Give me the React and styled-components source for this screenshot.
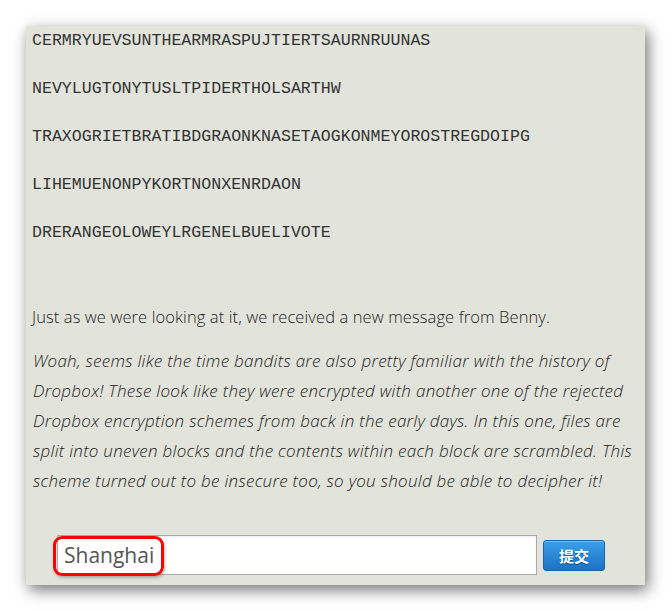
import React from "react";
import styled, { createGlobalStyle } from "styled-components";

const GlobalStyle = createGlobalStyle`
  html, body {
    margin: 0;
    padding: 0;
    background: #ffffff;
  }
`;

const Page = styled.div`
  padding: 26px 26px 27px 26px;
  width: 619px;
`;

const Panel = styled.div`
  background: #e2e4db;
  box-shadow: 3px 5px 14px rgba(0, 0, 0, 0.55);
  padding: 0 6px 10px 6px;
  display: flex;
  flex-direction: column;
  color: #222;
`;

const Cipher = styled.div`
  font-family: "Liberation Mono", "Courier New", monospace;
  font-size: 16.6px;
  line-height: 30px;
  color: #333;
  margin-bottom: 18px;
  white-space: nowrap;
`;

const CipherBlock = styled.div`
  display: flex;
  flex-direction: column;
  margin-bottom: 36px;
`;

const Intro = styled.p`
  font-family: "Open Sans", "Liberation Sans", sans-serif;
  font-weight: 300;
  font-size: 16.5px;
  line-height: 30px;
  margin: 0 0 14px 0;
  letter-spacing: 0.1px;
`;

const Message = styled.p`
  font-family: "Open Sans", "Liberation Sans", sans-serif;
  font-weight: 300;
  font-style: italic;
  font-size: 17px;
  line-height: 30px;
  margin: 0;
  padding-left: 1px;
  letter-spacing: 0.28px;
  white-space: nowrap;
`;

const FormRow = styled.form`
  display: flex;
  align-items: center;
  gap: 6px;
  margin-top: 39px;
  padding-left: 25px;
`;

const InputWrap = styled.div`
  position: relative;
`;

const Answer = styled.input`
  box-sizing: border-box;
  width: 480px;
  height: 40px;
  border: 1px solid #aaaaaa;
  background: #ffffff;
  box-shadow: inset 0 1px 2px rgba(0, 0, 0, 0.08);
  padding: 0 6px;
  font-family: "Open Sans", "DejaVu Sans", sans-serif;
  font-size: 21px;
  color: #555;
  outline: none;
`;

const Highlight = styled.div`
  position: absolute;
  left: -4px;
  top: 1px;
  width: 105px;
  height: 34px;
  border: 3px solid #ff0000;
  border-radius: 9px;
  box-shadow: 1px 2px 3px rgba(0, 0, 0, 0.25);
  pointer-events: none;
`;

const Submit = styled.button`
  box-sizing: border-box;
  width: 62px;
  height: 31px;
  border: 1px solid #1a64ad;
  border-radius: 3px;
  background: linear-gradient(#3aa0ea, #1c72c4);
  box-shadow: inset 0 1px 0 rgba(255, 255, 255, 0.3);
  color: #fff;
  font-family: "Noto Sans CJK SC", sans-serif;
  font-weight: 700;
  font-size: 15px;
  text-shadow: 0 1px 1px rgba(0, 0, 0, 0.4);
  cursor: pointer;
  padding: 0;
`;

const lines = [
  "CERMRYUEVSUNTHEARMRASPUJTIERTSAURNRUUNAS",
  "NEVYLUGTONYTUSLTPIDERTHOLSARTHW",
  "TRAXOGRIETBRATIBDGRAONKNASETAOGKONMEYOROSTREGDOIPG",
  "LIHEMUENONPYKORTNONXENRDAON",
  "DRERANGEOLOWEYLRGENELBUELIVOTE",
];

const message = [
  "Woah, seems like the time bandits are also pretty familiar with the history of",
  "Dropbox! These look like they were encrypted with another one of the rejected",
  "Dropbox encryption schemes from back in the early days. In this one, files are",
  "split into uneven blocks and the contents within each block are scrambled. This",
  "scheme turned out to be insecure too, so you should be able to decipher it!",
];

export default function App() {
  return (
    <Page>
      <GlobalStyle />
      <Panel>
        <CipherBlock>
          {lines.map((l) => (
            <Cipher key={l}>{l}</Cipher>
          ))}
        </CipherBlock>
        <Intro>Just as we were looking at it, we received a new message from Benny.</Intro>
        <Message>
          {message.map((m, i) => (
            <React.Fragment key={i}>
              {m}
              {i < message.length - 1 && <br />}
            </React.Fragment>
          ))}
        </Message>
        <FormRow onSubmit={(e) => e.preventDefault()}>
          <InputWrap>
            <Answer defaultValue="Shanghai" />
            <Highlight />
          </InputWrap>
          <Submit type="submit">提交</Submit>
        </FormRow>
      </Panel>
    </Page>
  );
}
